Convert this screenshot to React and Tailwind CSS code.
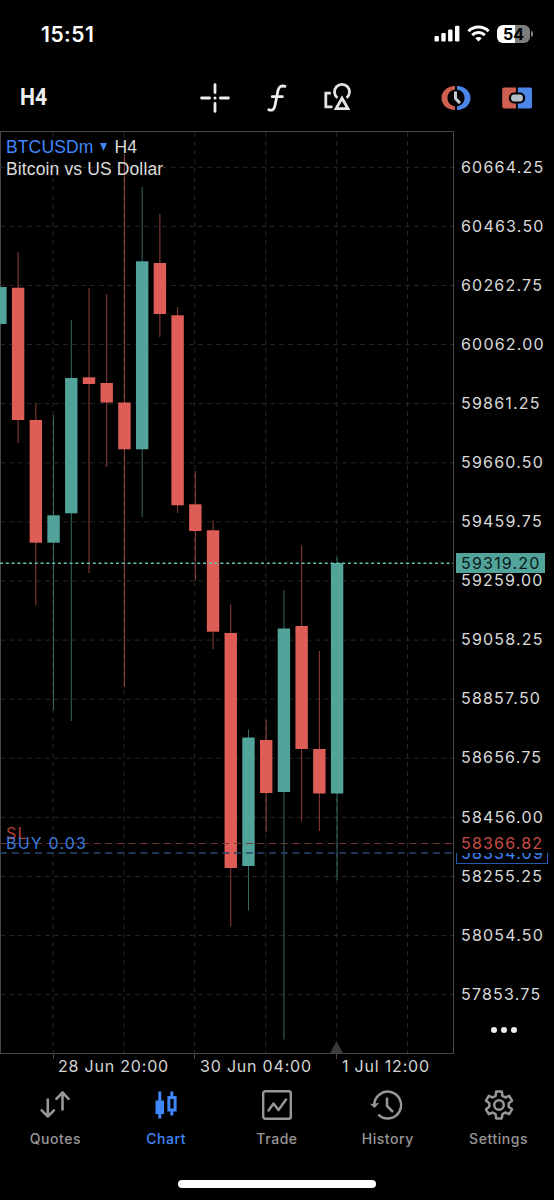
import React from 'react'

const UP = '#52a39a'
const DOWN = '#de5e57'

const prices = [
    '60664.25', '60463.50', '60262.75', '60062.00', '59861.25',
    '59660.50', '59459.75', '59259.00', '59058.25', '58857.50',
    '58656.75', '58456.00', '58255.25', '58054.50', '57853.75',
]

// [high, bodyTop, bodyBottom, low, isUp] in chart pixels, one every 17.72px
const candles = [
    [156, 156, 193, 193, true],
    [121, 156.7, 289, 312, false],
    [272, 289, 411.7, 474.5, false],
    [284, 384.3, 411.7, 579, true],
    [189, 247, 382.3, 590, true],
    [157, 246.3, 253, 442, false],
    [163, 252, 271.5, 336, false],
    [23, 271.5, 318.3, 556, false],
    [56, 130.3, 318.3, 386, true],
    [83, 132, 183, 206, false],
    [176, 184.3, 374.3, 382, false],
    [340, 373.3, 400, 450, false],
    [389.5, 399.3, 500.7, 518, false],
    [473.5, 502, 737, 795.5, false],
    [598.5, 606.5, 735, 779.5, true],
    [589, 609, 662, 701, false],
    [459, 497.5, 661, 908.5, true],
    [414.5, 495, 618, 690.5, false],
    [520, 618, 662.5, 700, false],
    [426, 432, 662.5, 749, true],
]

const gridX = [53, 124, 194.7, 265.7, 336.7, 407.5]

const StatusBar = () => (
    <div className="flex h-[66px] items-start justify-between pl-[41px] pr-[21px] pt-[22px]">
        <span className="pt-px text-[21px] font-semibold leading-6 tracking-[0.5px] text-white">15:51</span>
        <div className="flex items-center gap-[7px] pt-[3px]">
            <svg width="26" height="18" viewBox="0 0 26 18" fill="#fff">
                <rect x="0.5" y="11" width="4.4" height="5.5" rx="1.2" />
                <rect x="7.3" y="8" width="4.4" height="8.5" rx="1.2" />
                <rect x="14.1" y="4.5" width="4.4" height="12" rx="1.2" />
                <rect x="21" y="0.8" width="4.4" height="15.7" rx="1.2" />
            </svg>
            <svg width="23" height="18" viewBox="0 0 23 18" fill="none" stroke="#fff" strokeWidth="3">
                <path d="M1.4 6.2a14.4 14.4 0 0 1 20.2 0" />
                <path d="M5.2 10.1a9 9 0 0 1 12.6 0" />
                <path d="M11.5 16.6l-3.2-3.3a4.6 4.6 0 0 1 6.4 0z" fill="#fff" stroke="none" />
            </svg>
            <div className="flex items-center gap-px">
                <div className="flex h-[18px] w-[33px] items-center justify-center rounded-[6px] bg-linear-to-r from-white from-55% to-[#7d7d7d] to-55% text-base font-bold leading-none text-black">
                    54
                </div>
                <div className="h-[6px] w-[2px] rounded-r-full bg-[#7d7d7d]" />
            </div>
        </div>
    </div>
)

const Toolbar = () => (
    <div className="flex h-[65px] items-center pb-[3px] pl-5">
        <span className="w-[180px] font-[Roboto] text-[23px] font-bold leading-none text-[#f0f0f0]"><span className="inline-block origin-left scale-x-[0.92]">H4</span></span>
        <svg className="mt-px" width="30" height="30" viewBox="0 0 30 30" stroke="#eee" strokeWidth="2.8" strokeLinecap="round">
            <path d="M15 1.6v8M15 20.4v8M1.6 15h8M20.4 15h8" />
            <path d="M15 15h.01" strokeWidth="3" />
        </svg>
        {/* function symbol */}
        <svg className="ml-[37px] mt-px" width="20" height="30" viewBox="0 0 20 30" fill="none" stroke="#eee" strokeWidth="2.8" strokeLinecap="round" strokeLinejoin="round">
            <path d="M18 3.3c-4-1-6.2.4-7 4.2L8 22.5c-.8 4-2.6 5.4-6.2 4.3M5.200 13.7h10.2" />
        </svg>
        <svg className="ml-[36px]" width="30" height="30" viewBox="0 0 30 30" fill="none" stroke="#e4e4e4" strokeWidth="2.8">
            <path d="M7.8 11.2H2.8v13.6H9.5" />
            <path d="M14.4 15.8a7.5 7.5 0 1 1 9.2 0" />
            <path d="M19 16.2l-5.900 10.400h11.800z" />
        </svg>
        <svg className="ml-[87px] mt-px" width="32" height="26" viewBox="0 0 32 26" fill="none">
            <path d="M15 1C7.5 1 1.5 6 1.5 13s6 12 13.5 12v-3.600C10.5 20.5 7.5 17.5 7.5 13S10.5 5.5 15 4.6z" fill="#cf5f50" />
            <path d="M17 1c7.5 0 13.5 5 13.5 12s-6 12-13.500 12v-3.600c4.5-.9 7.5-3.9 7.5-8.400S21.5 5.500 17 4.6z" fill="#4c86e8" />
            <path d="M15.500 6.500v7l4.500 4.600" stroke="#c3cad2" strokeWidth="3" />
        </svg>
        <svg className="ml-[29px] mt-px" width="32" height="24" viewBox="0 0 32 24">
            <path d="M3 1.500h12v21H3a1.800 1.800 0 0 1-1.800-1.800V3.300A1.800 1.800 0 0 1 3 1.500z" fill="#cf5f50" />
            <path d="M16.800 1.500h12.400A1.800 1.800 0 0 1 31 3.300v17.400a1.800 1.800 0 0 1-1.800 1.800H16.800z" fill="#4c86e8" />
            <rect x="9" y="7.500" width="14" height="9" rx="4" fill="#b6bec8" stroke="#000" strokeWidth="2.2" />
        </svg>
    </div>
)

const CandleChart = () => (
    <svg className="block" width="460" height="929" viewBox="0 0 460 929" fill="none">
        {/* grid */}
        <g stroke="#262629" strokeDasharray="5 4">
            {gridX.map((x) => (
                <path key={x} d={`M${x} 1V922`} />
            ))}
            {prices.map((p, i) => (
                <path key={p} d={`M0 ${36.3 + i * 59.1}H459`} />
            ))}
        </g>
        <path d="M0 .5H453.5V922.5H0M.5 0V922" stroke="#464648" />
        <path d="M53.5 923v5M194.5 923v5M336.5 923v5" stroke="#464648" />

        {candles.map(([high, top, bottom, low, isUp], i) => {
            const x = 0.4 + i * 17.72
            return (
                <g key={i}>
                    <path d={`M${x} ${high}V${low}`} stroke={isUp ? UP : DOWN} opacity="0.65" />
                    <rect x={x - 6.2} y={top} width="12.4" height={bottom - top} fill={isUp ? UP : DOWN} />
                </g>
            )
        })}

        {/* bid line, stop loss and position */}
        <path d="M0 432.3H453" stroke="#63c2b2" strokeWidth="1.5" strokeDasharray="3 2.8" />
        <path d="M0 712.5H453" stroke="#753733" strokeDasharray="7 4.7" />
        <path d="M0 722H453" stroke="#28466f" strokeWidth="1.3" strokeDasharray="7 4.7" />
        <path d="M336.500 910.500l6.500 11.500h-13z" fill="#3b3b3d" />
    </svg>
)

const PriceAxis = () => (
    <div className="flex flex-col pl-px pt-[6px] text-[16px] tracking-[1.2px] text-[#dadada]">
        {prices.map((p) => (
            <span key={p} className="flex h-[59.1px] shrink-0 items-center leading-none">{p}</span>
        ))}
        <div className="ml-[30px] mt-[4px] flex gap-[4.500px]">
            <span className="size-[5.500px] rounded-full bg-[#eee]" />
            <span className="size-[5.500px] rounded-full bg-[#eee]" />
            <span className="size-[5.500px] rounded-full bg-[#eee]" />
        </div>
    </div>
)

const QuotesIcon = () => (
    <svg width="32" height="32" viewBox="0 0 32 32" fill="none" stroke="currentColor" strokeWidth="2.6" strokeLinecap="round" strokeLinejoin="round">
        <path d="M8.8 10.500v17M2.700 21.300l6.100 6.300 6.100-6.300" />
        <path d="M23.500 20.500v-17M17.400 9.800l6.100-6.300 6.100 6.300" />
    </svg>
)

const ChartIcon = () => (
    <svg width="32" height="32" viewBox="0 0 32 32" fill="none" stroke="currentColor" strokeWidth="3">
        <path d="M9.800 2.500v27M21.800 2.500v6M21.800 21v5.500" />
        <path d="M5.500 11.500H14V25H5.500z" fill="currentColor" stroke="none" />
        <path d="M18.900 8.600h6.200v12.300h-6.200z" />
    </svg>
)

const TradeIcon = () => (
    <svg width="32" height="32" viewBox="0 0 32 32" fill="none" stroke="currentColor" strokeWidth="2.4" strokeLinecap="round" strokeLinejoin="round">
        <rect x="2.2" y="2.2" width="27.6" height="27.6" rx="2" />
        <path d="M7.500 21.500l5-7 5 6.500L25 10.500" />
    </svg>
)

const HistoryIcon = () => (
    <svg className="-translate-x-[1.5px]" width="32" height="32" viewBox="0 0 32 32" fill="none" stroke="currentColor" strokeWidth="2.5">
        <path d="M3.800 16.500A13.400 13.400 0 1 1 7.800 25.600" />
        <path d="M0 15l4 3.500 4-4.500" fill="currentColor" strokeWidth="1" />
        <path d="M16.500 8.500v8.500l6 6" />
    </svg>
)

const SettingsIcon = () => (
    <svg width="32" height="32" viewBox="0 0 32 32" fill="none" stroke="currentColor" strokeWidth="2.5" strokeLinejoin="round">
        <path d="M12.600 6.800L13.200 2.600H18.800L19.400 6.800L22.300 8.500L26.200 6.900L29 11.700L25.700 14.300V17.700L29 20.300L26.200 25.100L22.300 23.500L19.400 25.200L18.800 29.400H13.200L12.600 25.200L9.700 23.500L5.800 25.100L3 20.300L6.300 17.700V14.300L3 11.700L5.800 6.900L9.700 8.500z" />
        <circle cx="16" cy="16" r="4.800" />
    </svg>
)

const tabs = [
    { label: 'Quotes', Icon: QuotesIcon },
    { label: 'Chart', Icon: ChartIcon, active: true },
    { label: 'Trade', Icon: TradeIcon },
    { label: 'History', Icon: HistoryIcon },
    { label: 'Settings', Icon: SettingsIcon },
]

const TabBar = () => (
    <nav className="grid grid-cols-5 pt-[9px]">
        {tabs.map(({ label, Icon, active }) => (
            <div key={label} className={`flex flex-col items-center gap-[9px] ${active ? "text-[#3f86fb]" : "text-[#979797]"}`}>
                <Icon />
                <span className="text-[14px] font-medium leading-[18px] tracking-[0.55px]">{label}</span>
            </div>
        ))}
    </nav>
)

export default function App() {
    return (
        <div className="flex h-[1200px] w-[554px] flex-col overflow-hidden bg-black font-[Inter,sans-serif]">
            <StatusBar />
            <Toolbar />
            <div className="relative flex h-[929px] shrink-0">
                <CandleChart />
                <PriceAxis />

                {/* symbol caption over the chart */}
                <div className="absolute left-[6px] top-[5px] font-['Liberation_Sans',sans-serif] text-[17.500px] leading-[22px] tracking-[0.13px] text-[#dcdcdc]">
                    <div className="flex items-center">
                        <span className="text-[#3f86fb]">BTCUSDm</span>
                        <svg className="ml-[7px] mr-[7px]" width="7" height="8" viewBox="0 0 7 8"><path d="M0 0h7L3.500 8z" fill="#3f86fb" /></svg>
                        <span>H4</span>
                    </div>
                    <div>Bitcoin vs US Dollar</div>
                </div>

                {/* position labels */}
                <span className="absolute left-[6px] top-[694px] text-[16px] leading-4 tracking-[1.2px] text-[#b6433e]">SL</span>
                <span className="absolute left-[6px] top-[704px] text-[16px] leading-4 tracking-[1.2px] text-[#3f7de0]">BUY 0.03</span>

                {/* tags over the price axis */}
                <span className="absolute left-[456px] top-[422px] h-5 w-[89px] bg-[#52a39a] pl-[5px] text-[16px] leading-5 tracking-[1.2px] text-[#0a1a18]">59319.20</span>
                <div className="absolute left-[456px] top-[722px] flex h-[11px] w-[92px] items-end overflow-hidden border border-t-0 border-[#2359ad] pl-1 text-[16px] tracking-[1.2px] text-[#3f86fb]">
                    <span className="mb-[2px] leading-4">58334.09</span>
                </div>
                <span className="absolute left-[461px] top-[703px] bg-black text-[16px] leading-[18px] tracking-[1.2px] text-[#c94b46]">58366.82</span>
            </div>
            <div className="-mt-[2px] flex h-[22px] shrink-0 pl-[58px] text-[16px] leading-4 tracking-[0.8px] text-[#d4d4d4]">
                <span className="w-[142px] shrink-0">28 Jun 20:00</span>
                <span className="w-[142px] shrink-0">30 Jun 04:00</span>
                <span>1 Jul 12:00</span>
            </div>
            <TabBar />
            <div className="mx-auto mb-[12px] mt-auto h-[8px] w-[198px] rounded-full bg-white" />
        </div>
    )
}
